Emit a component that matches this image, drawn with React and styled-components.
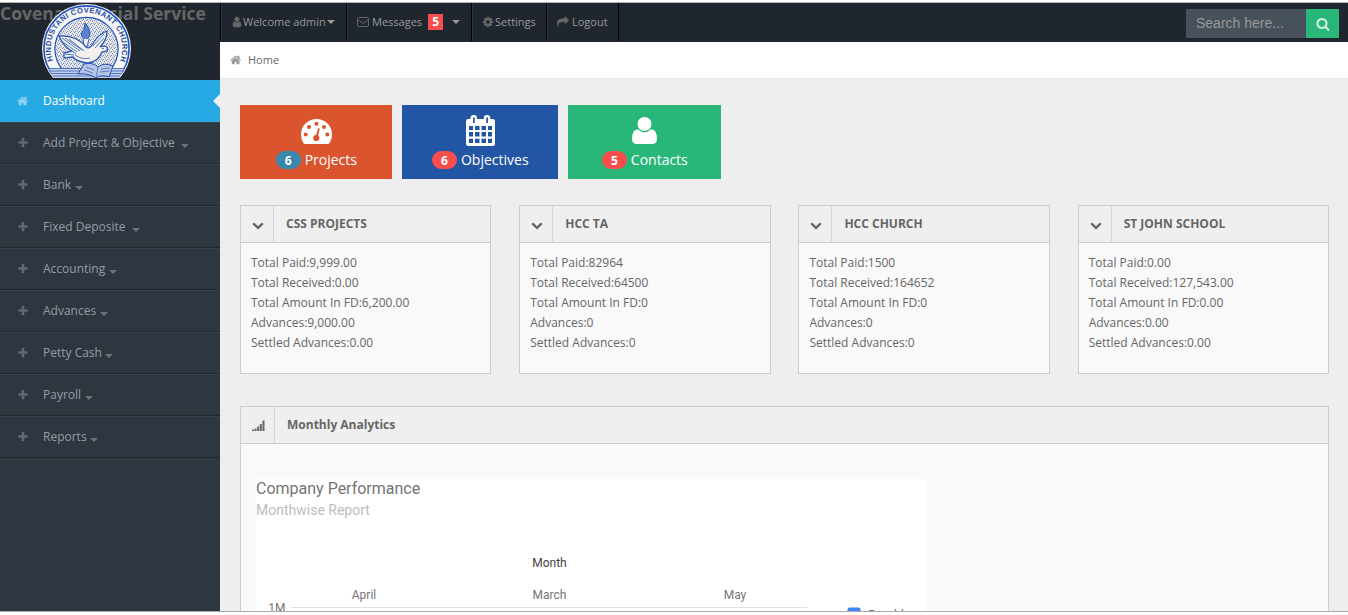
import React from "react";
import styled, { createGlobalStyle } from "styled-components";

const Global = createGlobalStyle`
  * { box-sizing: border-box; }
  body { margin: 0; background: #fff; font-family: "Open Sans", sans-serif; font-size: 12px; line-height: 20px; color: #666; }
`;

const PATHS = {
  home: "M1408 992v480q0 26-19 45t-45 19h-384v-384h-256v384h-384q-26 0-45-19t-19-45v-480q0-1 .5-3t.5-3l575-474 575 474q1 2 1 6zm223-69l-62 74q-8 9-21 11h-3q-13 0-21-7l-692-577-692 577q-12 8-24 7-13-2-21-11l-62-74q-8-10-7-23.5t11-21.5l719-599q32-26 76-26t76 26l244 204v-195q0-14 9-23t23-9h192q14 0 23 9t9 23v408l219 182q10 8 11 21.5t-7 23.5z",
  plus: "M1600 736v192q0 40-28 68t-68 28h-416v416q0 40-28 68t-68 28h-192q-40 0-68-28t-28-68v-416h-416q-40 0-68-28t-28-68v-192q0-40 28-68t68-28h416v-416q0-40 28-68t68-28h192q40 0 68 28t28 68v416h416q40 0 68 28t28 68z",
  user: "M1536 1399q0 109-62.5 187t-150.5 78h-854q-88 0-150.5-78t-62.5-187q0-85 8.5-160.5t31.5-152 58.5-131 94-89 134.5-34.5q131 128 313 128t313-128q76 0 134.5 34.5t94 89 58.5 131 31.5 152 8.5 160.5zm-256-887q0 159-112.5 271.5t-271.5 112.5-271.5-112.5-112.5-271.5 112.5-271.5 271.5-112.5 271.5 112.5 112.5 271.5z",
  search: "M1216 832q0-185-131.5-316.5t-316.5-131.5-316.5 131.5-131.5 316.5 131.5 316.5 316.5 131.5 316.5-131.5 131.5-316.5zm512 832q0 52-38 90t-90 38q-54 0-90-38l-343-342q-179 124-399 124-143 0-273.5-55.5t-225-150-150-225-55.5-273.5 55.5-273.5 150-225 225-150 273.5-55.5 273.5 55.5 225 150 150 225 55.5 273.5q0 220-124 399l343 343q37 37 37 90z",
  cog: "M1152 896q0-106-75-181t-181-75-181 75-75 181 75 181 181 75 181-75 75-181zm512-109v222q0 12-8 23t-20 13l-185 28q-19 54-39 91 35 50 107 138 10 12 10 25t-9 23q-27 37-99 108t-94 71q-12 0-26-9l-138-108q-44 23-91 38-16 136-29 186-7 28-36 28h-222q-14 0-24.5-8.5t-11.5-21.5l-28-184q-49-16-90-37l-141 107q-10 9-25 9-14 0-25-11-126-114-165-168-7-10-7-23 0-12 8-23 15-21 51-66.5t54-70.5q-27-50-41-99l-183-27q-13-2-21-12.5t-8-23.5v-222q0-12 8-23t19-13l186-28q14-46 39-92-40-57-107-138-10-12-10-24 0-10 9-23 26-36 98.5-107.5t94.5-71.5q13 0 26 10l138 107q44-23 91-38 16-136 29-186 7-28 36-28h222q14 0 24.5 8.5t11.5 21.5l28 184q49 16 90 37l142-107q9-9 24-9 13 0 25 10 129 119 165 170 7 8 7 22 0 12-8 23-15 21-51 66.5t-54 70.5q26 50 41 98l183 28q13 2 21 12.5t8 23.5z",
  share: "M1792 640q0 26-19 45l-512 512q-19 19-45 19t-45-19-19-45v-256h-224q-98 0-175.5 6t-154 21.5-133 42.5-105.5 69.5-80 101-48.5 138.5-17.5 181q0 55 5 123 0 6 2.5 23.5t2.5 26.5q0 15-8.5 25t-23.5 10q-16 0-28-17-7-9-13-22t-13.5-30-10.5-24q-127-285-127-451 0-199 53-333 162-403 875-403h224v-256q0-26 19-45t45-19 45 19l512 512q19 19 19 45z",
  down: "M1683 808l-742 741q-19 19-45 19t-45-19l-742-741q-19-19-19-45.5t19-45.5l166-165q19-19 45-19t45 19l531 531 531-531q19-19 45-19t45 19l166 165q19 19 19 45.5t-19 45.5z",
};

const Svg = styled.svg`
  display: block;
  flex: none;
  fill: currentColor;
`;
const Icon = ({ name, size = 12 }) => (
  <Svg width={size} height={size} viewBox="0 0 1792 1792"><path d={PATHS[name]} /></Svg>
);
const Envelope = () => (
  <Svg width="12" height="10" viewBox="0 0 12 10">
    <rect x="0.5" y="0.5" width="11" height="9" rx="1" fill="none" stroke="currentColor" />
    <path d="M0.8 2.5 L5 5.8 Q6 6.5 7 5.8 L11.2 2.5" fill="none" stroke="currentColor" />
  </Svg>
);
const Gauge = () => (
  <Svg width="31" height="25" viewBox="0 0 31 25">
    <path d="M15.5 0A15.5 15.5 0 0 0 0 15.5Q0 20 2.4 24Q3 25 4 25H27Q28 25 28.6 24Q31 20 31 15.5A15.5 15.5 0 0 0 15.5 0Z" />
    <g fill="#da542e">
      <circle cx="4.7" cy="15.5" r="2" /><circle cx="8" cy="8" r="2" /><circle cx="15.5" cy="4.8" r="2" />
      <circle cx="23" cy="8" r="2" /><circle cx="26.3" cy="15.5" r="2" /><circle cx="15.3" cy="19" r="3.1" />
      <path d="M14.6 18 L17.2 9 L18.7 9.4 L16.8 18.4Z" />
    </g>
  </Svg>
);
const Calendar = () => (
  <Svg width="29" height="31" viewBox="0 0 29 31">
    <path fillRule="evenodd" d="M2.2 4H4.5V3Q4.5 0 7.8 0T11 3V4H17.8V3Q17.8 0 21 0T24.3 3V4H26.8Q29 4 29 6.2V28.8Q29 31 26.8 31H2.2Q0 31 0 28.8V6.2Q0 4 2.2 4ZM7 2.5V8H8.7V2.5ZM20.3 2.5V8H22V2.5ZM3 11V15H7V11ZM9 11V15H13.5V11ZM15.5 11V15H20V11ZM22 11V15H26V11ZM3 17V21.5H7V17ZM9 17V21.5H13.5V17ZM15.5 17V21.5H20V17ZM22 17V21.5H26V17ZM3 23.7V28H7V23.7ZM9 23.7V28H13.5V23.7ZM15.5 23.7V28H20V23.7ZM22 23.7V28H26V23.7Z" />
  </Svg>
);
const Person = () => (
  <Svg width="25" height="27" viewBox="0 0 25 27">
    <circle cx="12.5" cy="7" r="7" />
    <path d="M6 12.2Q9 15.2 12.5 15.2T19 12.2Q25 12.5 25 22Q25 27 20 27H5Q0 27 0 22Q0 12.5 6 12.2Z" />
  </Svg>
);
const Signal = () => (
  <Svg width="13" height="11" viewBox="0 0 13 11">
    <path d="M0 9.5h2V11H0ZM2.6 8.5h2V11H2.6ZM5.2 6.5h2v4.5H5.2ZM7.8 4h2v7H7.8ZM10.5 0.5h2V11h-2Z" />
  </Svg>
);

const Window = styled.div`
  width: 1348px;
  height: 615px;
  padding-top: 2px;
  background: #fff;
  overflow: hidden;
`;
const Page = styled.div`
  display: flex;
  height: 610px;
  border-top: 1px solid #b9aebb;
  border-bottom: 1px solid #aaa;
  overflow: hidden;
`;
const Sidebar = styled.aside`
  width: 220px;
  flex: none;
  background: #2e363f;
`;
const Brand = styled.div`
  position: relative;
  height: 77px;
  background: #1f262d;
`;
const BrandTitle = styled.h1`
  margin: 0;
  font-size: 17.5px;
  line-height: 20px;
  font-weight: 700;
  white-space: nowrap;
  color: #666;
`;
const LogoSlot = styled.div`
  position: absolute;
  left: 42px;
  top: 1px;
  width: 90px;
  height: 74px;
  overflow: hidden;
`;
const SealText = styled.text`
  font: 700 7.6px "Liberation Sans", sans-serif;
  fill: #1c49ae;
`;

const Logo = () => (
  <LogoSlot>
    <svg width="90" height="90" viewBox="0 0 90 90">
      <defs>
        <path id="ring" d="M11.3 57.6 A35.7 35.7 0 1 1 77.7 57.6" />
        <clipPath id="disc"><circle cx="44.5" cy="45" r="31" /></clipPath>
        <pattern id="grain" width="4" height="4" patternUnits="userSpaceOnUse">
          <path d="M0 0h1v1h-1zM2 1h1v1h-1zM1 3h1v1h-1zM3 2.5h1v1h-1z" fill="#6f8ccb" />
        </pattern>
      </defs>
      <circle cx="44.5" cy="44.5" r="44.5" fill="#f8f7f3" />
      <circle cx="44.5" cy="44.5" r="42.6" fill="none" stroke="#1c50bd" strokeWidth="1.6" />
      <SealText><textPath href="#ring" startOffset="1" textLength="137">HINDUSTANI COVENANT CHURCH</textPath></SealText>
      <g clipPath="url(#disc)">
        <rect x="12" y="12" width="66" height="66" fill="#eae7e2" />
        <rect x="12" y="12" width="66" height="66" fill="url(#grain)" />
      </g>
      <circle cx="44.5" cy="45" r="31.6" fill="none" stroke="#1c50bd" strokeWidth="1.2" />
      <path d="M7 64.5H82L77 75H12Z" fill="#c3d0ec" />
      <path d="M7 64.5H82M8 67H81M9 69.5H80M11 72H78" stroke="#416bc4" strokeWidth="0.9" />
      <path d="M43 19Q48 24 48 30Q47 35 44 36Q39 34 39.5 29Q43 26 43 19Z" fill="#5f82cc" stroke="#2453b5" />
      <path d="M41 35L42 43H45L47 35" fill="#eef0f5" stroke="#3560bb" />
      <path d="M17 32Q35 31 44 43Q48 46 52 38Q57 30 65 27Q65 36 58 43Q67 40 65 47L60 48Q56 58 46 59Q35 58 31 53L22 54V49L30 47Q22 43 17 32Z" fill="#f2f1ee" stroke="#2b58b7" strokeWidth="1.3" />
      <path d="M20 34L38 47M23 34L40 46M27 35L42 47M21 38L35 48M24 43L34 50M62 30L51 42M62 34L53 44M33 51Q40 56 48 54M23 50L32 51" fill="none" stroke="#4d75c6" strokeWidth="1" />
      <circle cx="61" cy="44.5" r="0.8" fill="#2453b5" />
      <path d="M42 60Q51 58 56 63Q62 58 71 62L67 73Q60 70 54 74Q47 69 36 70Z" fill="#b7c5e4" stroke="#2453b5" />
      <path d="M56 63L54 74M44 63L52 66M42 66L51 69M59 65L68 64M58 68L67 67" stroke="#5d7fc9" />
    </svg>
  </LogoSlot>
);

const MenuItem = styled.a`
  position: relative;
  display: flex;
  align-items: center;
  height: 42px;
  padding-left: 17px;
  color: ${(p) => (p.$active ? "#fff" : "#939da8")};
  background: ${(p) => (p.$active ? "#27a9e3" : "transparent")};
  border-top: 1px solid ${(p) => (p.$active ? "#27a9e3" : "#37414b")};
  border-bottom: 1px solid ${(p) => (p.$active ? "#27a9e3" : "#1f262d")};
`;
const MenuIcon = styled.span`
  width: 26px;
  opacity: 0.5;
`;
const Caret = styled.i`
  border: 4px solid transparent;
  border-top-color: currentColor;
  border-bottom: 0;
  opacity: ${(p) => p.$opacity || 1};
  margin-left: ${(p) => p.$gap || 0}px;
  margin-top: ${(p) => p.$drop || 0}px;
`;
const Notch = styled.i`
  position: absolute;
  right: 0;
  top: 13px;
  border: 7px solid transparent;
  border-right-color: #eee;
  border-left: 0;
`;
const Main = styled.main`
  flex: 1;
  min-width: 0;
  background: #eee;
`;
const TopBar = styled.header`
  display: flex;
  justify-content: space-between;
  height: 39px;
  background: #1f262d;
`;
const Nav = styled.nav`
  display: flex;
  height: 38px;
  border-left: 1px solid #000;
  font-size: 11px;
`;
const NavItem = styled.a`
  display: flex;
  align-items: center;
  width: ${(p) => p.$w}px;
  padding-left: 9px;
  border-left: 1px solid #2e363f;
  border-right: 1px solid #000;
  color: #999;
  white-space: nowrap;
`;
const NavIcon = styled.span`
  margin-right: ${(p) => p.$gap ?? 1}px;
  color: #666;
`;
const Count = styled.span`
  width: 15px;
  height: 16px;
  margin: 0 9px 0 6px;
  background: #f74d4d;
  color: #fff;
  font-size: 12px;
  font-weight: 700;
  line-height: 16px;
  text-align: center;
`;
const Search = styled.form`
  display: flex;
  height: 29px;
  margin: 6px 9px 0 0;
`;
const SearchField = styled.input`
  width: 120px;
  padding: 0 10px 2px;
  border: 0;
  background: #47515b;
  font: 14px "Liberation Sans", sans-serif;
  &::placeholder { color: #999; opacity: 1; }
`;
const SearchButton = styled.button`
  display: flex;
  align-items: center;
  justify-content: center;
  width: 33px;
  padding: 1px 0 0;
  border: 0;
  background: #28b779;
  color: #d4f1e4;
`;
const Crumbs = styled.div`
  display: flex;
  align-items: center;
  gap: 6px;
  height: 37px;
  padding-left: 10px;
  background: #fff;
  border-bottom: 1px solid #e3ebeb;
  font-size: 11px;
`;
const CrumbIcon = styled.span`
  color: #999;
`;
const Content = styled.div`
  padding: 26px 19px 0 20px;
`;
const Tiles = styled.div`
  display: flex;
  gap: 10px;
`;
const Tile = styled.a`
  display: flex;
  flex-direction: column;
  align-items: center;
  width: ${(p) => p.$w}px;
  height: 74px;
  background: ${(p) => p.$bg};
  color: #fff;
`;
const TileIcon = styled.div`
  display: flex;
  align-items: flex-end;
  height: ${(p) => p.$h}px;
`;
const TileRow = styled.div`
  display: flex;
  align-items: center;
  gap: 4px;
  margin-top: auto;
  padding-left: 0.6px;
  height: 20px;
  margin-bottom: 9px;
  font-size: 14px;
`;
const Badge = styled.span`
  width: 25px;
  height: 18px;
  border-radius: 9px;
  background: ${(p) => p.$bg};
  font-size: 12px;
  font-weight: 700;
  line-height: 19px;
  text-align: center;
`;
const Cards = styled.div`
  display: grid;
  grid-template-columns: repeat(4, 1fr);
  gap: 27.9px;
  margin-top: 26px;
`;
const Box = styled.section`
  height: ${(p) => p.$h}px;
  background: #f9f9f9;
  border: 1px solid #cdcdcd;
`;
const BoxHead = styled.div`
  display: flex;
  height: 37px;
  background: #efefef;
  border-bottom: 1px solid #cdcdcd;
`;
const BoxIcon = styled.div`
  display: flex;
  align-items: center;
  justify-content: center;
  width: ${(p) => p.$w}px;
  padding: 1px 0 0 2px;
  border-right: 1px solid #d5d5d5;
`;
const BoxTitle = styled.h5`
  margin: 0;
  padding-left: 12px;
  font-size: 12px;
  font-weight: 700;
  line-height: 36px;
`;
const Figures = styled.div`
  padding: 10px;
`;
const Analytics = styled.div`
  margin-top: 32px;
`;
const ChartArea = styled.div`
  padding: 35px 15px 0;
`;
const Chart = styled.svg`
  display: block;
  background: #fff;
  font-family: Roboto, sans-serif;
`;

const menu = [
  ["Add Project & Objective", 6.5], ["Bank", 3.5], ["Fixed Deposite", 6.5], ["Accounting", 3.5],
  ["Advances", 3.5], ["Petty Cash", 3.5], ["Payroll", 3.5], ["Reports", 3.5],
];
const cards = [
  ["CSS PROJECTS", "9,999.00", "0.00", "6,200.00", "9,000.00", "0.00"],
  ["HCC TA", "82964", "64500", "0", "0", "0"],
  ["HCC CHURCH", "1500", "164652", "0", "0", "0"],
  ["ST JOHN SCHOOL", "0.00", "127,543.00", "0.00", "0.00", "0.00"],
];
const labels = ["Total Paid", "Total Received", "Total Amount In FD", "Advances", "Settled Advances"];

export default function App() {
  return (
    <Window>
      <Global />
      <Page>
        <Sidebar>
          <Brand>
            <BrandTitle>Covenant Social Service</BrandTitle>
            <Logo />
          </Brand>
          <MenuItem $active><MenuIcon><Icon name="home" /></MenuIcon>Dashboard<Notch /></MenuItem>
          {menu.map(([label, gap]) => (
            <MenuItem key={label}>
              <MenuIcon><Icon name="plus" /></MenuIcon>{label}<Caret $gap={gap} $drop={5} $opacity={0.6} />
            </MenuItem>
          ))}
        </Sidebar>
        <Main>
          <TopBar>
            <Nav>
              <NavItem $w={126}><NavIcon $gap={0}><Icon name="user" /></NavIcon>Welcome admin<Caret $gap={1} /></NavItem>
              <NavItem $w={125}><NavIcon $gap={3}><Envelope /></NavIcon>Messages<Count>5</Count><Caret /></NavItem>
              <NavItem $w={75}><NavIcon><Icon name="cog" /></NavIcon>Settings</NavItem>
              <NavItem $w={72}><NavIcon $gap={3}><Icon name="share" /></NavIcon>Logout</NavItem>
            </Nav>
            <Search>
              <SearchField placeholder="Search here..." />
              <SearchButton type="button"><Icon name="search" size={14} /></SearchButton>
            </Search>
          </TopBar>
          <Crumbs><CrumbIcon><Icon name="home" /></CrumbIcon>Home</Crumbs>
          <Content>
            <Tiles>
              <Tile $w={152} $bg="#da542e"><TileIcon $h={39}><Gauge /></TileIcon><TileRow><Badge $bg="#3a87ad">6</Badge>Projects</TileRow></Tile>
              <Tile $w={156} $bg="#2255a4"><TileIcon $h={41}><Calendar /></TileIcon><TileRow><Badge $bg="#f74d4d">6</Badge>Objectives</TileRow></Tile>
              <Tile $w={153} $bg="#28b779"><TileIcon $h={39}><Person /></TileIcon><TileRow><Badge $bg="#f74d4d">5</Badge>Contacts</TileRow></Tile>
            </Tiles>
            <Cards>
              {cards.map(([title, ...values]) => (
                <Box key={title} $h={169}>
                  <BoxHead><BoxIcon $w={33}><Icon name="down" /></BoxIcon><BoxTitle>{title}</BoxTitle></BoxHead>
                  <Figures>{values.map((v, i) => <div key={labels[i]}>{labels[i]}:{v}</div>)}</Figures>
                </Box>
              ))}
            </Cards>
            <Analytics>
              <Box $h={400}>
                <BoxHead><BoxIcon $w={34}><Signal /></BoxIcon><BoxTitle>Monthly Analytics</BoxTitle></BoxHead>
                <ChartArea>
                  <Chart width="670" height="300" viewBox="0 0 670 300">
                    <text x="0" y="15" fontSize="16" fill="#757575">Company Performance</text>
                    <text x="0" y="36" fontSize="14" fill="#bdbdbd">Monthwise Report</text>
                    <text x="293.5" y="88" fontSize="12" fill="#424242" textAnchor="middle">Month</text>
                    <g fontSize="12" fill="#757575" textAnchor="middle">
                      <text x="108" y="120">April</text>
                      <text x="293.5" y="120">March</text>
                      <text x="479" y="120">May</text>
                      <text x="29.5" y="133" textAnchor="end">1M</text>
                      <text x="612" y="140" textAnchor="start">Payable</text>
                    </g>
                    <path d="M35 128.5H551.5" stroke="#e0e0e0" />
                    <rect x="591.5" y="128.5" width="13" height="13" rx="2" fill="#4285f4" />
                  </Chart>
                </ChartArea>
              </Box>
            </Analytics>
          </Content>
        </Main>
      </Page>
    </Window>
  );
}
